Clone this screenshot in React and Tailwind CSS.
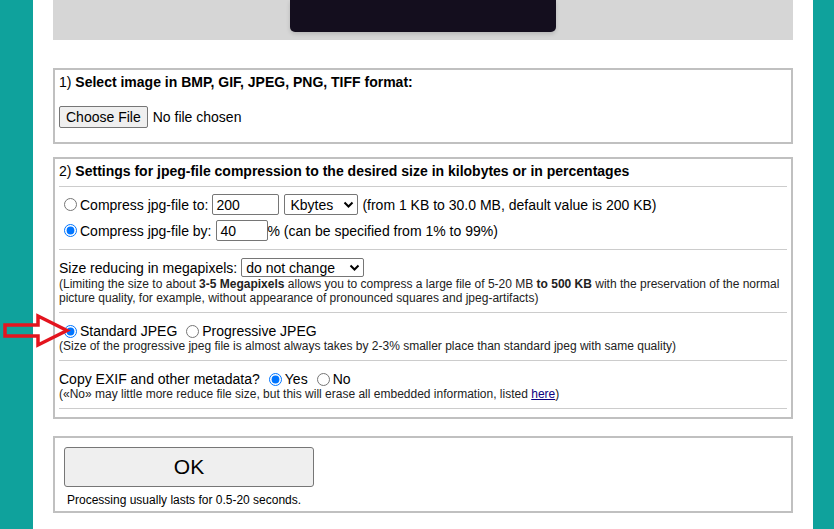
function Chevron() {
  return (
    <svg width="11" height="7" viewBox="0 0 11 7" className="shrink-0">
      <path d="M1.5 1.5l4 4 4-4" fill="none" stroke="#000" strokeWidth="2" />
    </svg>
  );
}

function Radio({ name, checked }) {
  return (
    <input
      type="radio"
      name={name}
      defaultChecked={checked}
      className="m-0 ml-[5px] mr-[3px] w-[13px] h-[13px] shrink-0"
    />
  );
}

export default function App() {
  return (
    <div className="relative min-h-[529px] bg-[#0fa29c] font-['Liberation_Sans',Arial,sans-serif] text-[14px] leading-[16px] text-black">
      <div className="ml-[33px] w-[780px] min-h-[529px] bg-white px-[20px]">
        <div className="h-[40px] bg-[#d6d6d6] flex justify-center">
          <div className="w-[266px] h-[32px] bg-[#140e1e] rounded-b-[5px] shadow-[0_2px_4px_rgba(0,0,0,0.15)]" />
        </div>

        {/* Box 1 */}
        <div className="mt-[28px] border-2 border-[#c0c0c0] px-[4px] pt-[4px] pb-[14px]">
          <div className="h-[16px]">
            1) <b>Select image in BMP, GIF, JPEG, PNG, TIFF format:</b>
          </div>
          <div className="mt-[16px] flex items-center h-[22px]">
            <span className="h-[22px] px-[6px] flex items-center border border-[#767676] rounded-[2px] bg-[#efefef]">
              Choose File
            </span>
            <span className="ml-[5px]">No file chosen</span>
          </div>
        </div>

        {/* Box 2 */}
        <div className="mt-[13px] border-2 border-[#c0c0c0] px-[4px] pt-[4px] pb-[8px]">
          <div className="h-[16px] mb-[7px]">
            2) <b>Settings for jpeg-file compression to the desired size in kilobytes or in percentages</b>
          </div>

          <div className="border-t border-[#cccccc] pt-[7px] pb-[8px] flex flex-col gap-[5px]">
            <div className="flex items-center h-[21px]">
              <Radio name="mode" />
              <span>Compress jpg-file to:</span>
              <span className="ml-[4px] w-[67px] h-[21px] border border-[#767676] rounded-[2px] pl-[3px] flex items-center">200</span>
              <span className="ml-[5px] w-[74px] h-[21px] border border-[#767676] rounded-[2px] pl-[5px] pr-[3px] flex items-center justify-between">
                <span>Kbytes</span>
                <Chevron />
              </span>
              <span className="ml-[4px]">(from 1 KB to 30.0 MB, default value is 200 KB)</span>
            </div>
            <div className="flex items-center h-[21px]">
              <Radio name="mode" checked />
              <span>Compress jpg-file by:</span>
              <span className="ml-[4px] w-[52px] h-[21px] border border-[#767676] rounded-[2px] pl-[4px] flex items-center">40</span>
              <span>% (can be specified from 1% to 99%)</span>
            </div>
          </div>

          <div className="border-t border-[#cccccc] pt-[8px] pb-[7px]">
            <div className="flex items-center h-[19px]">
              <span>Size reducing in megapixels:</span>
              <span className="ml-[4px] w-[123px] h-[19px] border border-[#767676] rounded-[2px] pl-[4px] pr-[3px] flex items-center justify-between">
                <span>do not change</span>
                <Chevron />
              </span>
            </div>
            <div className="text-[12px] leading-[14px] text-[#222]">
              <div className="whitespace-nowrap">
                (Limiting the size to about <b>3-5 Megapixels</b> allows you to compress a large file of 5-20 MB <b>to 500 KB</b> with the preservation of the normal
              </div>
              <div className="whitespace-nowrap">
                picture quality, for example, without appearance of pronounced squares and jpeg-artifacts)
              </div>
            </div>
          </div>

          <div className="border-t border-[#cccccc] pt-[10px] pb-[7px]">
            <div className="flex items-center h-[16px]">
              <Radio name="type" checked />
              <span>Standard JPEG</span>
              <span className="w-[4px]" />
              <Radio name="type" />
              <span>Progressive JPEG</span>
            </div>
            <div className="text-[12px] leading-[14px] text-[#222]">
              (Size of the progressive jpeg file is almost always takes by 2-3% smaller place than standard jpeg with same quality)
            </div>
          </div>

          <div className="border-t border-b border-[#cccccc] pt-[10px] pb-[7px]">
            <div className="flex items-center h-[16px]">
              <span>Copy EXIF and other metadata?</span>
              <span className="w-[4px]" />
              <Radio name="exif" checked />
              <span>Yes</span>
              <span className="w-[4px]" />
              <Radio name="exif" />
              <span>No</span>
            </div>
            <div className="text-[12px] leading-[14px] text-[#222]">
              («No» may little more reduce file size, but this will erase all embedded information, listed{" "}
              <a href="#" className="text-[#0b0080] underline">here</a>)
            </div>
          </div>
        </div>

        {/* Box 3 */}
        <div className="mt-[17px] border-2 border-[#c0c0c0] px-[4px] pt-[9px] pb-[4px]">
          <div className="ml-[5px] w-[250px] h-[40px] border border-[#767676] rounded-[3px] bg-[#efefef] flex items-center justify-center text-[21px]">
            OK
          </div>
          <div className="mt-[6px] pl-[8px] text-[12px] leading-[14px]">
            Processing usually lasts for 0.5-20 seconds.
          </div>
        </div>
      </div>

      <svg className="absolute left-0 top-[310px]" width="80" height="42" viewBox="0 0 80 42">
        <polygon
          points="5,15 38,15 38,6 67,20.5 38,35 38,26 5,26"
          fill="none"
          stroke="#e3141e"
          strokeWidth="3.5"
          strokeLinejoin="miter"
        />
      </svg>
    </div>
  );
}
